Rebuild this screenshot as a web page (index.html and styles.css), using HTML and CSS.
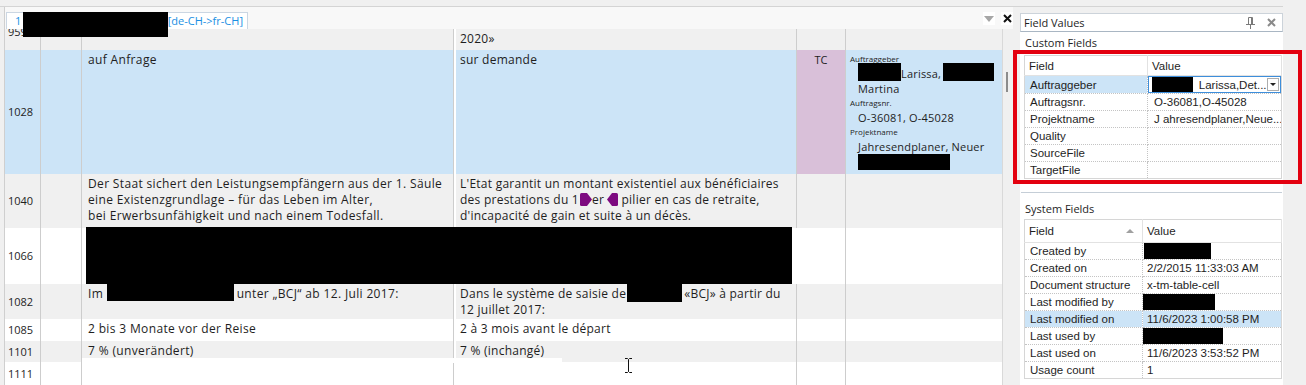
FILE: index.html
```html
<!DOCTYPE html>
<html lang="de">
<head>
  <meta charset="UTF-8">
  <title>Editor - Field Values</title>
  <link rel="stylesheet" href="styles.css">
</head>
<body>
  <div class="topbar"></div>
  <div class="workspace">
    <section class="editor">
      <div class="tabs">
        <div class="tab">
          <span>1</span>
          <span class="redact redact-tab"></span>
          <span class="tab-lang">[de-CH-&gt;fr-CH]</span>
        </div>
        <div class="tab-tools">
          <span class="tool-btn"><span class="tri-down"></span></span>
          <span class="tool-btn">
            <svg width="9" height="9" viewBox="0 0 9 9"><path d="M1 1L8 8M8 1L1 8" stroke="#111" stroke-width="2"/></svg>
          </span>
        </div>
      </div>
      <div class="grid-wrap">
        <div class="grid">
          <div class="seg seg-cut alt">
            <div class="c-num">959</div>
            <div class="c-flag"></div>
            <div class="c-src"></div>
            <div class="c-gap"></div>
            <div class="c-trg">2020»</div>
            <div class="c-status"></div>
            <div class="c-meta"></div>
          </div>

          <div class="seg seg-1028 selected">
            <div class="c-num">1028</div>
            <div class="c-flag"></div>
            <div class="c-src">auf Anfrage</div>
            <div class="c-gap"></div>
            <div class="c-trg">sur demande</div>
            <div class="c-status tc">TC</div>
            <div class="c-meta">
              <div class="meta-label">Auftraggeber</div>
              <div class="meta-value"><span class="redact r-name1"></span>Larissa,<span class="redact r-name2"></span><br>Martina</div>
              <div class="meta-label">Auftragsnr.</div>
              <div class="meta-value">O-36081, O-45028</div>
              <div class="meta-label">Projektname</div>
              <div class="meta-value">Jahresendplaner, Neuer<br><span class="redact r-proj"></span></div>
            </div>
          </div>

          <div class="seg seg-1040 alt">
            <div class="c-num">1040</div>
            <div class="c-flag"></div>
            <div class="c-src">Der Staat sichert den Leistungsempfängern aus der 1. Säule<br>eine Existenzgrundlage – für das Leben im Alter,<br>bei Erwerbsunfähigkeit und nach einem Todesfall.</div>
            <div class="c-gap"></div>
            <div class="c-trg">L'Etat garantit un montant existentiel aux bénéficiaires<br>des prestations du 1<svg class="tag" width="12" height="13" viewBox="0 0 12 13"><path d="M0 1.5Q0 0 1.5 0H7L12 6.5L7 13H1.5Q0 13 0 11.5Z" fill="#7d0a80"/></svg>er<svg class="tag tag-close" width="11" height="13" viewBox="0 0 11 13"><path d="M11 1.5Q11 0 9.5 0H5L0 6.5L5 13H9.5Q11 13 11 11.5Z" fill="#7d0a80"/></svg> pilier en cas de retraite,<br>d'incapacité de gain et suite à un décès.</div>
            <div class="c-status"></div>
            <div class="c-meta"></div>
          </div>

          <div class="seg seg-1066">
            <div class="c-num">1066</div>
            <div class="c-flag"></div>
            <div class="redact redact-row"></div>
            <div class="c-status"></div>
            <div class="c-meta"></div>
          </div>

          <div class="seg seg-1082 alt">
            <div class="c-num">1082</div>
            <div class="c-flag"></div>
            <div class="c-src">Im <span class="redact r-src82"></span>unter „BCJ“ ab 12. Juli 2017:</div>
            <div class="c-gap"></div>
            <div class="c-trg">Dans le système de saisie de<span class="redact r-trg82"></span>«BCJ» à partir du<br>12 juillet 2017:</div>
            <div class="c-status"></div>
            <div class="c-meta"></div>
          </div>

          <div class="seg seg-1085">
            <div class="c-num">1085</div>
            <div class="c-flag"></div>
            <div class="c-src">2 bis 3 Monate vor der Reise</div>
            <div class="c-gap"></div>
            <div class="c-trg">2 à 3 mois avant le départ</div>
            <div class="c-status"></div>
            <div class="c-meta"></div>
          </div>

          <div class="seg seg-1101 alt">
            <div class="c-num">1101</div>
            <div class="c-flag"></div>
            <div class="c-src">7 % (unverändert)</div>
            <div class="c-gap"></div>
            <div class="c-trg">7 % (inchangé)</div>
            <div class="c-status"></div>
            <div class="c-meta"></div>
          </div>

          <div class="seg seg-1111">
            <div class="c-num">1111</div>
            <div class="c-flag"></div>
            <div class="c-src"></div>
            <div class="c-gap"></div>
            <div class="c-trg"></div>
            <div class="c-status"></div>
            <div class="c-meta"></div>
          </div>
        </div>
        <div class="scrollbar"><div class="thumb"></div></div>
      </div>
    </section>

    <aside class="panel">
      <div class="panel-title">
        <span>Field Values</span>
        <span class="panel-icons">
          <svg width="9" height="12" viewBox="0 0 9 12"><path d="M2.5 0.5H6.5V7.5M2.5 0.5V7.5M5.5 1V7.5M0 7.5H9M4.5 7.5V12" stroke="#7a7a7a" fill="none"/></svg>
          <svg width="9" height="9" viewBox="0 0 9 9"><path d="M1 1L8 8M8 1L1 8" stroke="#8a8a8a" stroke-width="2"/></svg>
        </span>
      </div>
      <div class="panel-body">
        <div class="section-title">Custom Fields</div>
        <table class="props props-custom">
          <tr><th>Field</th><th>Value</th></tr>
          <tr class="current">
            <td class="sel">Auftraggeber</td>
            <td class="edit"><span class="combo"><span class="redact r-combo"></span><span class="combo-text">Larissa,Det...</span><span class="combo-btn"><span class="tri-small"></span></span></span></td>
          </tr>
          <tr><td>Auftragsnr.</td><td>O-36081,O-45028</td></tr>
          <tr><td>Projektname</td><td>J ahresendplaner,Neue...</td></tr>
          <tr><td>Quality</td><td></td></tr>
          <tr><td>SourceFile</td><td></td></tr>
          <tr><td>TargetFile</td><td></td></tr>
        </table>
        <div class="splitter"></div>
        <div class="section-title">System Fields</div>
        <table class="props props-system">
          <tr><th>Field <span class="sort-up"></span></th><th>Value</th></tr>
          <tr><td>Created by</td><td><span class="redact r-sys1"></span></td></tr>
          <tr><td>Created on</td><td>2/2/2015 11:33:03 AM</td></tr>
          <tr><td>Document structure</td><td>x-tm-table-cell</td></tr>
          <tr><td>Last modified by</td><td><span class="redact r-sys2"></span></td></tr>
          <tr class="hl"><td>Last modified on</td><td>11/6/2023 1:00:58 PM</td></tr>
          <tr><td>Last used by</td><td><span class="redact r-sys3"></span></td></tr>
          <tr><td>Last used on</td><td>11/6/2023 3:53:52 PM</td></tr>
          <tr><td>Usage count</td><td>1</td></tr>
        </table>
      </div>
    </aside>
  </div>

  <div class="highlight-box"></div>
  <div class="white-mask"></div>
  <svg class="ibeam" width="9" height="17" viewBox="0 0 9 17"><path d="M1 1.5H3.5L4.5 2.5L5.5 1.5H8M4.5 2.5V14.5M1 15.5H3.5L4.5 14.5L5.5 15.5H8" stroke="#111" fill="none"/></svg>
</body>
</html>
```

FILE: styles.css
```css
/* Base */
body {
  margin: 0;
  width: 1306px;
  height: 385px;
  overflow: hidden;
  position: relative;
  background: #f0f0f0;
  font-family: 'Open Sans', 'Noto Sans', sans-serif;
  font-size: 11px;
  color: #1e1e1e;
}
.topbar {
  width: 1283px;
  height: 6px;
  border-bottom: 1px solid #d4d4d4;
}
.workspace {
  display: flex;
  height: 378px;
}

/* Editor */
.editor {
  width: 1008px;
  margin-left: 4px;
  border-left: 1px solid #cfcfcf;
  display: flex;
  flex-direction: column;
}
.tabs {
  height: 22px;
  display: flex;
  align-items: flex-end;
  background: #f8f8f8;
}
.tab {
  position: relative;
  width: 242px;
  height: 17px;
  margin-left: 1px;
  box-sizing: border-box;
  padding: 0 4px 0 8px;
  border: 1px solid #cbd6e2;
  border-bottom: none;
  background: #fff;
  color: #1a8fe3;
  font-size: 11px;
  line-height: 16px;
  display: flex;
  justify-content: space-between;
}
.redact {
  display: inline-block;
  background: #000;
}
.redact-tab {
  position: absolute;
  left: 16px;
  top: -1px;
  width: 145px;
  height: 25px;
  z-index: 2;
}
.tab-tools {
  margin-left: auto;
  align-self: stretch;
  display: flex;
  gap: 6px;
  padding-top: 5px;
}
.tool-btn {
  width: 12px;
  height: 13px;
  background: #fff;
  display: flex;
  align-items: center;
  justify-content: center;
}
.tri-down {
  width: 0;
  height: 0;
  border-left: 5px solid transparent;
  border-right: 5px solid transparent;
  border-top: 6px solid #a6a6a6;
}

.grid-wrap {
  flex: 1;
  display: flex;
  overflow: hidden;
}
.grid {
  width: 998px;
  overflow: hidden;
  background: #fff;
}
.scrollbar {
  width: 10px;
  background: #f0f0f0;
  border-left: 1px solid #d9d9d9;
}
.scrollbar .thumb {
  width: 2px;
  height: 20px;
  margin: 43px 0 0 3px;
  background: #8c8c8c;
}

/* Segment rows */
.seg {
  display: grid;
  grid-template-columns: 36px 41px 371px 3px 341px 49px 157px;
  line-height: 16px;
  background: #fff;
}
.seg > div {
  box-sizing: border-box;
  border-right: 1px solid #cdcdcd;
}
.seg .c-src,
.seg .c-trg {
  font-size: 12px;
  letter-spacing: 0.35px;
  white-space: nowrap;
  overflow: hidden;
}
.seg .c-trg { letter-spacing: 0.25px; }
.seg .c-src {
  border-right: none;
  padding: 2px 6px;
}
.seg .c-gap {
  border-right: none;
  border-left: 1px solid #cdcdcd;
  background: #fff;
}
.seg .c-trg {
  padding: 2px 4px 2px 4px;
}
.c-num {
  display: flex;
  align-items: center;
  padding-left: 3px;
}
.alt { background: #f0f0f0; }
.selected { background: #cce4f7; }
.c-status.tc {
  background: #d9c0d9;
  text-align: center;
  padding-top: 2px;
}
.c-meta {
  padding: 2px 4px;
}
.meta-label {
  font-size: 8px;
  line-height: 14px;
}
.meta-value {
  margin-left: 8px;
  line-height: 15px;
  letter-spacing: 0.2px;
}
.r-name1 { width: 43px; height: 18px; margin: -3px 0 0; vertical-align: top; }
.r-name2 { width: 51px; height: 18px; margin: -3px 0 0 2px; vertical-align: top; }
.r-proj { width: 92px; height: 16px; vertical-align: top; }

.tag {
  vertical-align: -2px;
  margin-left: 1px;
}
.tag-close { margin: 0 0 0 3px; }

.seg-cut { height: 37px; margin-top: -16px; }
.seg-cut .c-trg { padding-top: 18px; }
.seg-1028 { height: 124px; }
.seg-1040 { height: 54px; }
.seg-1066 { height: 56px; }
.seg-1082 { height: 35px; }
.seg-1085 { height: 22px; }
.seg-1101 { height: 21px; }
.seg-1111 { height: 23px; }

.seg .redact-row {
  grid-column: 3 / 6;
  margin: -1px 5px 0 4px;
  height: 57px;
  border: none;
}
.r-src82 { width: 127px; height: 17px; vertical-align: top; margin: -2px 3px 0 0; }
.r-trg82 { width: 55px; height: 18px; vertical-align: top; margin: -2px 2px 0 1px; }

/* Field values panel */
.panel {
  width: 263px;
  margin-left: 7px;
  display: flex;
  flex-direction: column;
  font-family: 'Liberation Sans', Arial, sans-serif;
  font-size: 11.5px;
}
.panel-title {
  height: 19px;
  margin-top: 6px;
  box-sizing: border-box;
  border: 1px solid #ccd3da;
  border-bottom-color: #a9b6c3;
  background: #fff;
  padding: 0 6px 0 3px;
  display: flex;
  align-items: center;
  justify-content: space-between;
  font-family: 'Open Sans', 'Noto Sans', sans-serif;
  font-size: 11px;
}
.panel-icons {
  display: flex;
  align-items: center;
  gap: 12px;
}
.panel-body {
  flex: 1;
  background: #fff;
  padding: 0 1px 0 4px;
}
.section-title {
  padding: 3px 0 0 1px;
  line-height: 16px;
  font-family: 'Open Sans', 'Noto Sans', sans-serif;
  font-size: 11px;
}
.props {
  width: 100%;
  border-collapse: collapse;
  border: 1px solid #d6d6d6;
  table-layout: fixed;
}
.props-custom { margin-top: 4px; }
.props-system { margin-top: 2px; }
.props th {
  height: 19px;
  text-align: left;
  font-weight: normal;
  padding: 0 4px;
  border-bottom: 1px solid #e2e2e2;
  border-right: 1px solid #e2e2e2;
  position: relative;
}
.props-system th { height: 22px; }
.props td {
  height: 16px;
  padding: 0 5px;
  white-space: nowrap;
  overflow: hidden;
  border-bottom: 1px dotted #c4c4c4;
  border-right: 1px dotted #c4c4c4;
}
.props-custom th:first-child { width: 114px; }
.props-system th:first-child { width: 109px; }
.props td:last-child { padding-left: 6px; }
.props-system td:last-child { padding-left: 4px; }
.props td.sel { background: #cce4f7; }
.props tr.hl td { background: #cce4f7; }
.props td.edit { padding: 0; }
.combo {
  display: flex;
  align-items: center;
  height: 17px;
  box-sizing: border-box;
  border: 1px solid #3d8edb;
  padding: 0 1px 0 3px;
}
.r-combo { width: 43px; height: 15px; }
.combo-text { margin-left: 6px; }
.combo-btn {
  margin-left: auto;
  width: 13px;
  height: 13px;
  box-sizing: border-box;
  border: 1px solid #adadad;
  display: flex;
  align-items: center;
  justify-content: center;
}
.tri-small {
  width: 0;
  height: 0;
  border-left: 3px solid transparent;
  border-right: 3px solid transparent;
  border-top: 3px solid #222;
}
.sort-up {
  position: absolute;
  right: 8px;
  top: 9px;
  width: 0;
  height: 0;
  border-left: 4px solid transparent;
  border-right: 4px solid transparent;
  border-bottom: 4px solid #a0a0a0;
}
.r-sys1 { width: 67px; height: 22px; margin: -6px 0 -1px -3px; vertical-align: top; }
.r-sys2 { width: 73px; height: 17px; margin: -1px 0 0 -5px; vertical-align: top; }
.r-sys3 { width: 82px; height: 20px; margin: -5px 0 0 -6px; vertical-align: top; }
.splitter {
  height: 1px;
  margin-top: 13px;
  margin-left: -3px;
  background: #c5ced7;
}
.splitter + .section-title { padding-top: 8px; }

/* Overlays */
.highlight-box {
  position: absolute;
  left: 1013px;
  top: 50px;
  width: 289px;
  height: 134px;
  box-sizing: border-box;
  border: 4px solid #e3000f;
}
.white-mask {
  position: absolute;
  left: 82px;
  top: 358px;
  width: 480px;
  height: 5px;
  background: #fff;
}
.ibeam {
  position: absolute;
  left: 624px;
  top: 357px;
}
```
